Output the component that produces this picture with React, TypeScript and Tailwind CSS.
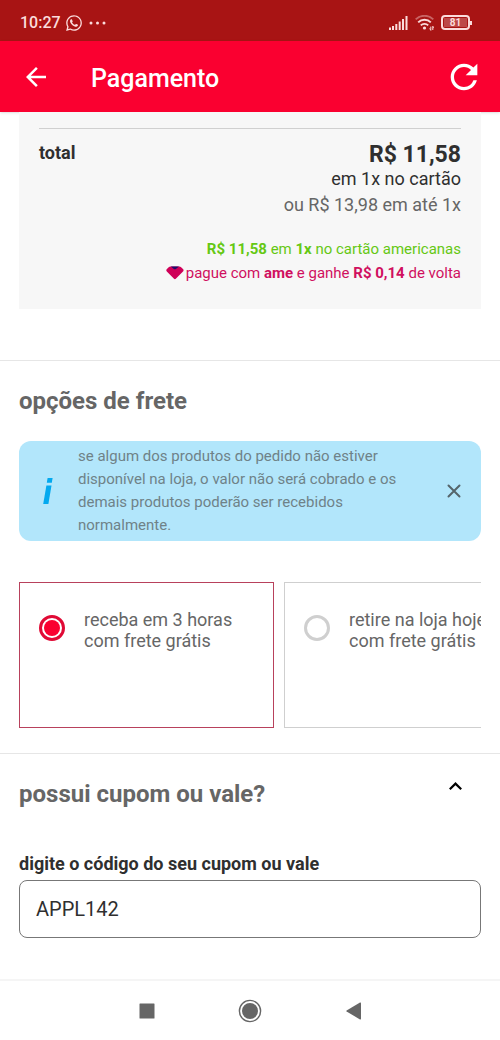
import React, { useState } from "react";
import { FaWhatsapp } from "react-icons/fa";
import { MdArrowBack, MdRefresh } from "react-icons/md";

interface ShippingOption {
  id: string;
  title: string;
  detail: string;
}

const shippingOptions: ShippingOption[] = [
  { id: "delivery", title: "receba em 3 horas", detail: "com frete grátis" },
  { id: "pickup", title: "retire na loja hoje", detail: "com frete grátis" },
];

const StatusBar: React.FC = () => (
  <div className="flex h-[41px] items-center justify-between bg-[#a81414] pr-7 pl-5 pt-1 text-[#fbdcdc]">
    <div className="flex items-center gap-1">
      <span className="text-base font-medium">10:27</span>
      <FaWhatsapp size={18} />
      <svg width="20" height="4" viewBox="0 0 20 4" fill="currentColor" className="ml-0.5">
        <circle cx="2" cy="2" r="1.5" />
        <circle cx="8.5" cy="2" r="1.5" />
        <circle cx="15" cy="2" r="1.5" />
      </svg>
    </div>
    <div className="flex items-center gap-[7px]">
      <svg width="19" height="14" viewBox="0 0 19 14" fill="currentColor">
        <rect x="0" y="11.5" width="2" height="2.5" />
        <rect x="3" y="10" width="2" height="4" />
        <rect x="6.3" y="8" width="2" height="6" />
        <rect x="9.7" y="5.5" width="2" height="8.5" />
        <rect x="13" y="3" width="2" height="11" />
        <rect x="16.5" y="0" width="2" height="14" />
      </svg>
      <svg width="19" height="16" viewBox="0 0 19 16" fill="none" stroke="currentColor" strokeWidth="1.9">
        <path d="M0.7 4.4 A12.5 12.5 0 0 1 18.3 4.4" opacity="0.4" />
        <path d="M3.2 7.4 A8.8 8.8 0 0 1 15.8 7.4" />
        <path d="M5.8 10.4 A5.2 5.2 0 0 1 13.2 10.4" />
        <circle cx="9.5" cy="13" r="1.6" fill="currentColor" stroke="none" />
        <path d="M15.8 11.6 V15.4 M17.8 11.2 V15" strokeWidth="1" />
        <path d="M14.6 13.4 L15.8 15.4 M17.8 11.2 L19 13.2" strokeWidth="0.8" />
      </svg>
      <div className="flex items-center">
        <div className="flex h-[15px] w-[29px] items-center justify-center rounded border-2 border-current p-px">
          <span className="flex h-full w-full items-center justify-center bg-[#d07c7c]/50 text-[10px] leading-none font-bold">
            81
          </span>
        </div>
        <div className="h-1 w-0.5 bg-current"></div>
      </div>
    </div>
  </div>
);

const Header: React.FC = () => (
  <header className="flex h-[71px] items-center bg-[#fa0030] pr-4 pl-[21px] text-white shadow-sm">
    <button aria-label="Voltar">
      <MdArrowBack size={30} />
    </button>
    <h1 className="ml-10 flex-1 pt-1 text-[25px] font-medium">Pagamento</h1>
    <button aria-label="Atualizar">
      <MdRefresh size={40} />
    </button>
  </header>
);

const DiamondIcon: React.FC = () => (
  <svg width="18" height="14" viewBox="0 0 18 14" className="mt-[5px] shrink-0">
    <path
      d="M4.6 0.4 H13.2 Q14.4 0.4 15.4 1.4 L17.2 3.2 Q18 4.3 17 5.5 L9.8 12.8 Q8.9 13.7 8 12.8 L0.8 5.5 Q-0.2 4.3 0.7 3.2 L2.4 1.4 Q3.4 0.4 4.6 0.4 Z"
      fill="#cf0058"
    />
    <path d="M4.8 0.4 H13 L9.9 2.9 Q8.9 3.6 7.9 2.9 Z" fill="#1d0c6b" />
  </svg>
);

const OrderTotal: React.FC = () => (
  <section className="mx-[19px] bg-[#f7f7f7] px-5 pt-4 pb-6">
    <div className="flex items-start justify-between border-t border-[#d0d0d0] pt-3 text-[#2f2f2f]">
      <h2 className="text-lg leading-6 font-bold">total</h2>
      <div className="text-right text-lg leading-6">
        <p className="pt-px text-[23px] leading-[25px] font-bold">R$ 11,58</p>
        <p>em 1x no cartão</p>
        <p className="pt-0.5 text-[#666]">ou R$ 13,98 em até 1x</p>
      </div>
    </div>
    <div className="mt-5 text-right text-[15px] leading-6">
      <p className="text-[#65c813]">
        <b>R$ 11,58</b> em <b>1x</b> no cartão americanas
      </p>
      <div className="flex justify-end gap-0.5 text-[#d0105f]">
        <DiamondIcon />
        <p>
          pague com <b>ame</b> e ganhe <b>R$ 0,14</b> de volta
        </p>
      </div>
    </div>
  </section>
);

const InfoNotice: React.FC<{ onClose: () => void }> = ({ onClose }) => (
  <div className="mt-6 flex items-center rounded-xl bg-[#b2e6fb] py-1 pr-5 pl-6">
    <svg width="10" height="26" viewBox="0 0 10 26" className="shrink-0" fill="#03a9ef">
      <path d="M4.6 0 H9.6 L8.8 4.8 H3.8 Z" />
      <path d="M3.4 7.4 H8.5 L5.4 26 H0.2 Z" />
    </svg>
    <p className="ml-[25px] flex-1 text-[15px] leading-[23px] text-[#6f8288]">
      se algum dos produtos do pedido não estiver disponível na loja, o valor não será cobrado e os demais produtos
      poderão ser recebidos normalmente.
    </p>
    <button aria-label="Fechar" onClick={onClose} className="ml-10">
      <svg width="14" height="14" viewBox="0 0 14 14" stroke="#55656b" strokeWidth="2" strokeLinecap="round">
        <path d="M1.5 1.5 L12.5 12.5 M12.5 1.5 L1.5 12.5" />
      </svg>
    </button>
  </div>
);

const Shipping: React.FC = () => {
  const [selected, setSelected] = useState("delivery");
  const [showNotice, setShowNotice] = useState(true);

  return (
    <section className="mt-[51px] border-t border-[#e6e6e6] px-[19px] pt-6 pb-[25px]">
      <h2 className="text-2xl leading-8 font-bold text-[#666]">opções de frete</h2>
      {showNotice && <InfoNotice onClose={() => setShowNotice(false)} />}
      <div className="mt-[41px] flex gap-2.5 overflow-hidden">
        {shippingOptions.map((option) => (
          <label
            key={option.id}
            className={`flex h-[146px] w-[255px] shrink-0 items-start border pt-[26px] pl-[19px] ${
              selected === option.id ? "border-[#b8415c]" : "border-[#cfcfcf]"
            }`}
          >
            <input
              type="radio"
              name="shipping"
              value={option.id}
              checked={selected === option.id}
              onChange={() => setSelected(option.id)}
              className="mt-1.5 size-[26px] shrink-0 appearance-none rounded-full border-3 border-[#cfcfcf] p-0.5 checked:border-[#e00a35] checked:bg-[#fa0030] checked:bg-clip-content"
            />
            <span className="ml-[19px] text-lg leading-[21px] whitespace-nowrap text-[#666]">
              {option.title}
              <br />
              {option.detail}
            </span>
          </label>
        ))}
      </div>
    </section>
  );
};

const Coupon: React.FC = () => {
  const [code, setCode] = useState("APPL142");
  const [open, setOpen] = useState(true);

  return (
    <section className="border-t border-[#e6e6e6] px-[19px] pt-6 pb-10">
      <div className="flex items-start justify-between pr-[19px]">
        <h2 className="text-2xl leading-8 font-bold text-[#666]">possui cupom ou vale?</h2>
        <button aria-label="Mostrar cupom" aria-expanded={open} onClick={() => setOpen(!open)} className="pt-1">
          <svg width="13" height="8" viewBox="0 0 13 8" fill="none" stroke="#000" strokeWidth="2.2">
            <path d="M0.8 7.2 L6.5 1.6 L12.2 7.2" />
          </svg>
        </button>
      </div>
      {open && (
        <div className="mt-[42px]">
          <label htmlFor="coupon" className="block text-lg leading-6 font-bold text-[#2f2f2f]">
            digite o código do seu cupom ou vale
          </label>
          <input
            id="coupon"
            type="text"
            value={code}
            onChange={(e) => setCode(e.target.value)}
            className="mt-1 h-[58px] w-full rounded-lg border border-[#777] px-4 text-xl text-[#2f2f2f]"
          />
        </div>
      )}
    </section>
  );
};

const NavigationBar: React.FC = () => (
  <nav className="flex h-[61px] items-center justify-center gap-[78px] border-t-2 border-[#f5f5f5] text-[#666]">
    <button aria-label="Recentes" className="flex w-[27px] justify-center">
      <svg width="16" height="16" viewBox="0 0 16 16" fill="currentColor">
        <rect x="0.5" y="0.5" width="15" height="15" rx="0.5" />
      </svg>
    </button>
    <button aria-label="Início">
      <svg width="24" height="24" viewBox="0 0 24 24" fill="currentColor">
        <circle cx="12" cy="12" r="10.6" fill="none" stroke="currentColor" strokeWidth="1.4" />
        <circle cx="12" cy="12" r="8" />
      </svg>
    </button>
    <button aria-label="Voltar" className="flex w-[27px] justify-center">
      <svg width="15" height="18" viewBox="0 0 15 18" fill="currentColor">
        <path d="M14 0.6 Q15 0.2 15 1.2 V16.8 Q15 17.8 14 17.4 L0.6 9.6 Q0 9 0.6 8.4 Z" />
      </svg>
    </button>
  </nav>
);

const App: React.FC = () => {
  return (
    <div className="flex min-h-screen flex-col bg-white font-['Roboto',sans-serif]">
      <StatusBar />
      <Header />
      <main className="flex-1">
        <OrderTotal />
        <Shipping />
        <Coupon />
      </main>
      <NavigationBar />
    </div>
  );
};

export default App;
